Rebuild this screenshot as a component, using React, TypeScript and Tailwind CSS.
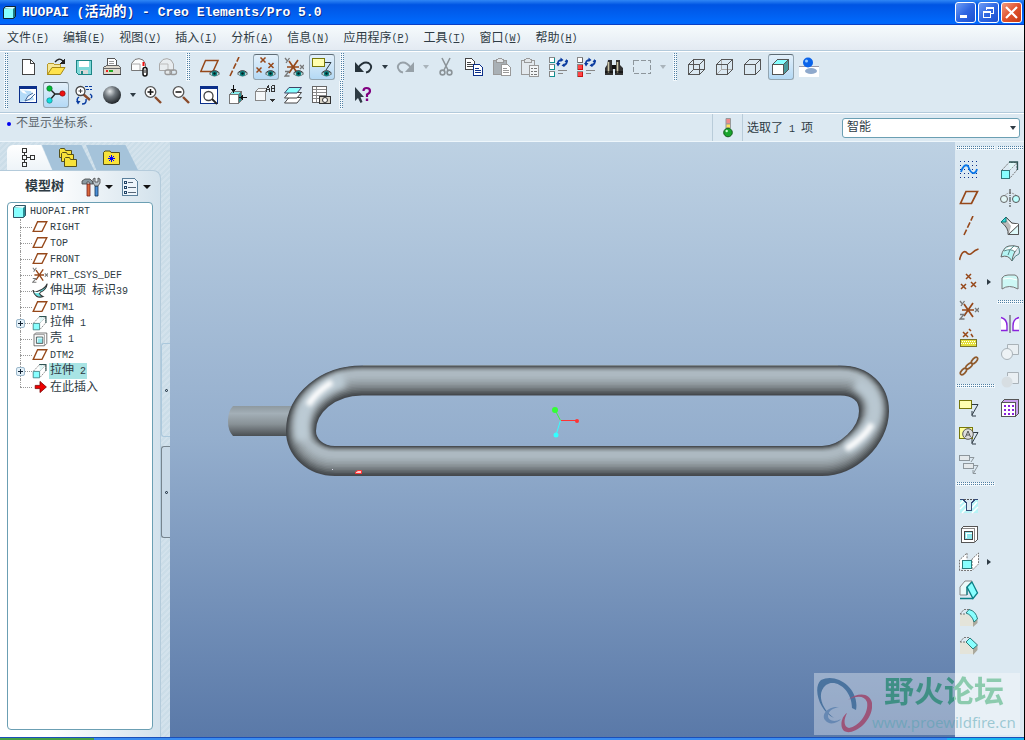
import type { ReactNode } from "react";

const BROWN = "#96481a";
const TEAL = "#0f8f8f";
const INK = "#2e3b44";

/* ---------- text ---------- */

// Latin is set smaller than Chinese so that two Latin letters fill one Chinese cell.
function Mixed({ text }: { text: string }) {
  const parts = text.match(/[\u4e00-\u9fff]+|[^\u4e00-\u9fff]+/g) ?? [];
  return (
    <>
      {parts.map((part, i) =>
        /[\u4e00-\u9fff]/.test(part) ? (
          <span key={i} className="text-[12px]">
            {part}
          </span>
        ) : (
          <span key={i} className="text-[10px]">
            {part}
          </span>
        )
      )}
    </>
  );
}

/* ---------- icons ---------- */

function Icon({ children, smooth = false }: { children: ReactNode; smooth?: boolean }) {
  return (
    <svg
      width="20"
      height="20"
      viewBox="0 0 20 20"
      fill="none"
      shapeRendering={smooth ? "auto" : "crispEdges"}
      aria-hidden="true"
      className="shrink-0"
    >
      {children}
    </svg>
  );
}

const eye = (
  <g shapeRendering="auto">
    <path d="M9.5 17Q14.500 11.500 19.500 17Q14.500 21 9.500 17Z" fill="#d7efef" stroke="#6f7f80" />
    <circle cx="14.500" cy="16.500" r="2.700" fill="#0d8080" />
    <circle cx="14.500" cy="16.500" r="1.200" fill="#022" />
    <path d="M9.500 16Q14.500 11 19.500 16" stroke="#444" />
  </g>
);

const csys = (
  <g stroke={BROWN} strokeWidth="1.700" shapeRendering="auto">
    <path d="M3 10H15M5 4L14 17M14 3L5 16" />
    <path d="M1 1L3 3.500M5.500 1L2 6M1 14.500H5L1 19H5.500M16 8L20 12M20 8L16 12" stroke="#777" strokeWidth="1.300" />
  </g>
);

const cross = (x: number, y: number) => <path d={`M${x - 2.5} ${y - 2.5}l5 5m0 -5l-5 5`} />;

const wire = (
  <g stroke="#555">
    <path d="M1.500 7.500H12.500V17.500H1.500ZM1.500 7.500L6.500 2.500H17.500L12.500 7.500M17.500 2.500V12.500L12.500 17.500" />
  </g>
);

const sheet = (x: number, y: number, color: string) => (
  <g>
    <path d={`M${x + 0.5} ${y + 0.5}h6l3 3v8h-9z`} fill="#fff" stroke={color} />
    <path d={`M${x + 2} ${y + 4.5}h4M${x + 2} ${y + 6.5}h6M${x + 2} ${y + 8.5}h6`} stroke={color} />
  </g>
);

// Three status boxes: the first stays plain, the rest are filled with the box colour.
const regen = (box: string, fill: string) => (
  <>
    {[0, 7, 14].map((y, i) => (
      <g key={y}>
        <path d={`M1.500 ${y + 0.5}h5v5h-5z`} fill={i === 0 ? "#fff" : fill} stroke="#888" />
        <path d={`M6.500 ${y + 1}v4.500h-5`} stroke={i === 0 && fill !== "#fff" ? "#666" : box} />
      </g>
    ))}
    <g shapeRendering="auto" stroke="#0a3ca0" strokeWidth="1.800">
      <path d="M10 8Q9 3 14 3M19 3Q19 8 15 8.500" />
      <path d="M8 6h4.500L10 9.500ZM12.500 .5V5L15.500 3ZM16.500 6V10L13.500 8.500ZM16.500 5H20L18.500 2Z" fill="#0a3ca0" stroke="none" />
    </g>
    <path d="M10 13.500H19M10 16.500H15" stroke="#888" />
  </>
);

const extrude = (
  <>
    <path d="M1.500 10.500H9.500V18.500H1.500Z" fill="#8ff" stroke="#33777a" />
    <g shapeRendering="auto">
      <path d="M2 10L9 2.500H17L10 10M17 3V10L10 18" stroke="#777" strokeDasharray="2 1" />
      <path d="M9 2H17.500V10" stroke="#2e5555" strokeWidth="1.300" />
      <path d="M9 3h7l-6 7z" fill="#dff7f7" />
    </g>
  </>
);

const lens = (
  <g shapeRendering="auto">
    <path d="M12 12L18 18" stroke="#8a4a2a" strokeWidth="2.400" />
    <circle cx="7.500" cy="7" r="5.300" fill="#fff" stroke="#555" strokeWidth="1.300" />
  </g>
);

const plane = <path d="M7 3.500H18.500L12.500 15.500H1.500Z" stroke={BROWN} strokeWidth="1.700" shapeRendering="auto" />;

const note = (
  <>
    <path d="M.500 2.500H12.500V10.500H.500Z" fill="#ffffb0" stroke="#77770a" />
    <path d="M13 6.500H19L13 17M13 13V18H17" stroke={INK} shapeRendering="auto" />
  </>
);

const shellBox = (
  <>
    <path d="M2.500 4.500L4.500 2.500H18.500V15.500L15.500 18.500H2.500Z" fill="#fff" stroke="#555" />
    <path d="M2.500 4.500H15.500V18.500" stroke="#888" />
    <path d="M5.500 7.500H13.500V15.500H5.500Z" fill="#8fe8ee" stroke="#444" />
    <path d="M7 14V9H13" stroke="#fff" />
  </>
);

const icons: Record<string, ReactNode> = {
  file: (
    <Icon>
      <path d="M4.500 2.500H12.500L16.500 6.500V17.500H4.500Z" fill="#fff" stroke="#444" />
      <path d="M12.500 2.500V6.500H16.500" stroke="#444" />
    </Icon>
  ),
  open: (
    <Icon>
      <path d="M1.500 17.500V7.500L3 6H7L8.500 7.500H14.500V10.500" fill="#f5e79a" stroke="#b99a2a" />
      <path d="M1.500 17.500L6 10.500H19L14.500 17.500Z" fill="#ffe34d" stroke="#a58814" shapeRendering="auto" />
      <path d="M9 5Q13 0 17 4" stroke="#222" strokeWidth="1.300" shapeRendering="auto" />
      <path d="M19 1.500V6.500H14Z" fill="#222" />
    </Icon>
  ),
  save: (
    <Icon>
      <path d="M2.500 3.500H17.500V17.500H4.500L2.500 15.500Z" fill="#7fd9d9" stroke="#1c8585" />
      <path d="M5 4H15V10H5Z" fill="#fff" />
      <path d="M6 13H14V17H6Z" fill="#d8d8d8" />
      <path d="M7 14H9V17H7Z" fill="#1c8585" />
    </Icon>
  ),
  print: (
    <Icon>
      <path d="M5.500 9V1.500H12.500L14.500 3.500V9" fill="#fff" stroke="#555" />
      <path d="M7 4.500H12M7 6.500H12" stroke="#999" />
      <path d="M1.500 10.500L4.500 8.500H16.500L18.500 10.500V17.500H1.500Z" fill="#ddd8cc" stroke="#666" />
      <path d="M2 11.500H18" stroke="#666" />
      <path d="M4 13H6V15H4Z" fill="#e22" />
      <path d="M7 13H11V15H7Z" fill="#2a2" />
      <path d="M2 17.500H19" stroke="#333" />
    </Icon>
  ),
  mailClip: (
    <Icon smooth>
      <path d="M1.500 6.500L5 2.500Q9 .5 13 3L15.500 7V13.500H1.500Z" fill="#fdfdfd" stroke="#777" />
      <path d="M1.500 7H10M10 7V13" stroke="#aaa" />
      <path d="M13.500 5V9" stroke="#e11" strokeWidth="2" />
      <rect x="13" y="10.500" width="4" height="8.500" rx="2" stroke="#111" strokeWidth="1.500" fill="#fff" />
      <path d="M15 12.500V16" stroke="#111" />
    </Icon>
  ),
  mailLink: (
    <Icon smooth>
      <path d="M1.500 6.500L5 2.500Q9 .5 13 3L15.500 7V13.500H1.500Z" fill="#e8ecef" stroke="#aaa" />
      <path d="M1.500 7H10M10 7V13" stroke="#bbb" />
      <rect x="7" y="13" width="6.500" height="4.500" rx="2" stroke="#999" fill="#e4e8ea" strokeWidth="1.300" />
      <rect x="12" y="13" width="6.500" height="4.500" rx="2" stroke="#999" strokeWidth="1.300" />
    </Icon>
  ),
  planeEye: (
    <Icon smooth>
      <path d="M5.500 3.500H18L13 14.500H.800Z" stroke={BROWN} strokeWidth="1.500" />
      {eye}
    </Icon>
  ),
  axisEye: (
    <Icon smooth>
      <path d="M2 19L11 0" stroke={BROWN} strokeWidth="1.600" strokeDasharray="6 2" />
      {eye}
    </Icon>
  ),
  pointEye: (
    <Icon smooth>
      <g stroke={BROWN} strokeWidth="1.500">
        {cross(7, 3)}
        {cross(15, 8.5)}
        {cross(3, 13)}
      </g>
      {eye}
    </Icon>
  ),
  csysEye: (
    <Icon smooth>
      {csys}
      {eye}
    </Icon>
  ),
  noteEye: (
    <Icon>
      <path d="M.500 1.500H12.500V9.500H.500Z" fill="#ffffb0" stroke="#77770a" />
      <path d="M13 5.500H19L14 13" stroke={INK} shapeRendering="auto" />
      {eye}
    </Icon>
  ),
  undo: (
    <Icon smooth>
      <path d="M4 11Q9 4 14.500 6Q19 9 16 13Q15 15 12 15.500" stroke="#26323a" strokeWidth="2" />
      <path d="M1 5V15H10Z" fill="#26323a" />
    </Icon>
  ),
  redo: (
    <Icon smooth>
      <path d="M16 11Q11 4 5.500 6Q1 9 4 13Q5 15 8 15.500" stroke="#97a1a8" strokeWidth="2" />
      <path d="M19 5V15H10Z" fill="#97a1a8" />
    </Icon>
  ),
  cut: (
    <Icon smooth>
      <path d="M6 1L12 13M14 1L8 13" stroke="#8b9398" strokeWidth="1.600" />
      <circle cx="6.500" cy="15.500" r="2.400" stroke="#8b9398" strokeWidth="1.600" />
      <circle cx="13.500" cy="15.500" r="2.400" stroke="#8b9398" strokeWidth="1.600" />
    </Icon>
  ),
  copy: (
    <Icon>
      {sheet(1, 1, "#444")}
      {sheet(9, 7, "#0b2f8a")}
    </Icon>
  ),
  paste: (
    <Icon>
      <path d="M1.500 3.500H14.500V17.500H1.500Z" fill="#a9b0b5" stroke="#999" />
      <path d="M4.500 5.500V3L6.500 1.500H9.500L11.500 3V5.500Z" fill="#e2e6e9" stroke="#999" />
      {sheet(9, 7, "#999")}
    </Icon>
  ),
  pasteSpecial: (
    <Icon>
      <path d="M1.500 3.500H14.500V17.500H1.500Z" fill="#e3e9ee" stroke="#999" />
      <path d="M4.500 5.500V3L6.500 1.500H9.500L11.500 3V5.500Z" fill="#e2e6e9" stroke="#999" />
      <path d="M9.500 8.500H18.500V19.500H9.500Z" fill="#f2f5f7" stroke="#999" />
      <path d="M11 11.500h2m1 0h3M11 14.500h2m1 0h3M11 17.500h2m1 0h3" stroke="#777" />
    </Icon>
  ),
  regen: <Icon>{regen(TEAL, "#fff")}</Icon>,
  regenRed: <Icon>{regen("#c11", "#f44")}</Icon>,
  find: (
    <Icon smooth>
      <path d="M4 3H8V8L9 10V18H1V11L3 8ZM12 3H16V8L19 11V18H11V10L12 8Z" fill="#333" />
      <path d="M8 8H12V12H8Z" fill="#111" />
      <path d="M4.500 5V16M13.500 5V16" stroke="#ccc6a8" strokeWidth="1.600" />
      <path d="M1 15H9M11 15H19" stroke="#000" strokeWidth="1" />
    </Icon>
  ),
  select: (
    <Icon>
      <path d="M1.500 3.500H18.500V16.500H1.500Z" stroke="#8d969c" strokeDasharray="5 2" />
    </Icon>
  ),
  wireframe: (
    <Icon>
      {wire}
      <path d="M6.500 2.500V12.500H17.500M6.500 12.500L1.500 17.500" stroke="#555" />
    </Icon>
  ),
  hidden: (
    <Icon>
      <path d="M6.500 2.500V12.500H17.500M6.500 12.500L1.500 17.500" stroke="#aaa" />
      {wire}
    </Icon>
  ),
  noHidden: <Icon>{wire}</Icon>,
  shaded: (
    <Icon>
      <path d="M1.500 7.500L6.500 2.500H17.500L12.500 7.500Z" fill="#8ff" />
      <path d="M1.500 7.500H12.500V17.500H1.500Z" fill="#fff" />
      <path d="M12.500 7.500L17.500 2.500V12.500L12.500 17.500Z" fill="#4a9a9c" />
      {wire}
    </Icon>
  ),
  realism: (
    <Icon smooth>
      <path d="M0 10H20V20H0Z" fill="#fff" />
      <path d="M0 9.500H20" stroke="#99a" />
      <ellipse cx="12" cy="14" rx="6" ry="3" fill="#8fa9cc" />
      <circle cx="9" cy="5.500" r="5" fill="#0a63ea" />
      <circle cx="7.500" cy="4" r="1.500" fill="#9cf" />
    </Icon>
  ),
  repaint: (
    <Icon>
      <path d="M1.500 1.500H18.500V17.500H1.500Z" fill="#fff" stroke="#0b2f8a" />
      <path d="M1 1H19V4H1Z" fill="#0b2f8a" />
      <path d="M2 5L13 6L16 15L2 17Z" fill="#b4dbf8" shapeRendering="auto" />
      <path d="M2 5L6 5.500L9 9L5 8Z" fill="#fff" shapeRendering="auto" />
      <path d="M15 8L10 11L7 16L12 14L17 9" fill="#eef6ff" stroke="#456a9a" shapeRendering="auto" />
    </Icon>
  ),
  spin: (
    <Icon smooth>
      <path d="M4 4L9 9H16M9 9L4 15" stroke="#222" strokeWidth="1.400" />
      <circle cx="3.500" cy="3.500" r="2.700" fill="#0b3" stroke="#163" strokeWidth=".600" />
      <circle cx="16.500" cy="8.500" r="2.700" fill="#e11" stroke="#711" strokeWidth=".600" />
      <circle cx="3.500" cy="15.500" r="2.700" fill="#1dd" stroke="#177" strokeWidth=".600" />
    </Icon>
  ),
  orient: (
    <Icon smooth>
      <path d="M9 9L16 15" stroke="#8a4a2a" strokeWidth="2.400" />
      <circle cx="6.500" cy="6" r="4.500" stroke="#444" strokeWidth="1.300" fill="#fff" />
      <path d="M4.500 6H8.500M6.500 4V8" stroke="#444" />
      <path d="M11 1.500H19M12 4.500H18" stroke="#0a3ca0" strokeDasharray="3 1" />
      <path d="M5 12Q2 14 4 17M8 19Q13 19 12 14M16 9Q19 11 17 13" stroke="#0a3ca0" strokeWidth="1.500" />
      <path d="M2 16H6.500L4 19.500Z" fill="#0a3ca0" />
    </Icon>
  ),
  sphere: (
    <Icon smooth>
      <defs>
        <radialGradient id="sphere" cx=".38" cy=".3" r=".7">
          <stop offset="0" stopColor="#e4e8ea" />
          <stop offset=".45" stopColor="#70787e" />
          <stop offset="1" stopColor="#22272b" />
        </radialGradient>
      </defs>
      <circle cx="10" cy="10" r="9" fill="url(#sphere)" />
    </Icon>
  ),
  zoomIn: (
    <Icon smooth>
      {lens}
      <path d="M4.500 7H10.500M7.500 4V10" stroke="#111" strokeWidth="1.500" />
    </Icon>
  ),
  zoomOut: (
    <Icon smooth>
      {lens}
      <path d="M4.500 7H10.500" stroke="#111" strokeWidth="1.500" />
    </Icon>
  ),
  refit: (
    <Icon>
      <path d="M1.500 1.500H18.500V18.500H1.500Z" fill="#fff" stroke="#0b2f8a" />
      <path d="M1 1H19V4H1Z" fill="#0b2f8a" />
      <g shapeRendering="auto">
        <circle cx="9.500" cy="11" r="4.500" stroke="#444" strokeWidth="1.300" />
        <path d="M13 14L18 19" stroke="#222" strokeWidth="1.800" />
      </g>
    </Icon>
  ),
  reorient: (
    <Icon>
      <path d="M2.500 9.500H11.500V18.500H2.500Z" fill="#fff" stroke="#777" />
      <path d="M2.500 9.500L5.500 6.500H14.500L11.500 9.500Z" fill="#8ee" stroke="#777" />
      <path d="M11.500 9.500L14.500 6.500V15.500L11.500 18.500Z" fill="#2a9090" stroke="#777" />
      <path d="M6.500 0V7M14 12.500H20" stroke="#111" />
      <path d="M4 4H9L6.500 8ZM16 10V15L12.500 12.500Z" fill="#111" />
    </Icon>
  ),
  views: (
    <Icon>
      <path d="M.500 6.500L3.500 3.500H11.500L10.500 6.500V15.500H.500ZM.500 6.500H10.500" fill="#f5f8fa" stroke="#888" />
      <path d="M11.500 7V3L12.500 .5H13.500L14.500 3V7M11.500 4.500H14.500M16.500 .5V6.500H19.500V.5ZM17 3.500H19.500" stroke="#222" strokeWidth=".900" />
      <path d="M15 14H20L17.500 17Z" fill="#333" />
    </Icon>
  ),
  layers: (
    <Icon smooth>
      <path d="M1.500 18L6 12.500H18.500L14 18Z" fill="#fff" stroke="#444" />
      <path d="M1.500 13L6 7.500H18.500L14 13Z" fill="#fff" stroke="#444" />
      <path d="M1.500 8L6 2.500H18.500L14 8Z" fill="#8ff" stroke="#446" />
    </Icon>
  ),
  viewManager: (
    <Icon>
      <path d="M1.500 1.500H15.500V17.500H1.500Z" fill="#fff" stroke="#666" />
      <path d="M2 4.500H15M2 7.500H15M2 10.500H15M2 13.500H9M5.500 2V17" stroke="#888" />
      <path d="M8.500 11.500H19.500V18.500H8.500Z" fill="#d8d3c6" stroke="#333" />
      <circle cx="14" cy="15" r="2.500" fill="#fff" stroke="#333" shapeRendering="auto" />
    </Icon>
  ),
  help: (
    <Icon smooth>
      <path d="M2 2V16L5 13L7.500 18L9.500 17L7.500 12H11Z" fill={INK} />
      <path d="M10.500 6Q10.500 3 13.500 3Q17 3 17 6Q17 8 14 9.500V12" stroke="#800080" strokeWidth="2.200" />
      <path d="M12.800 13.500H15.200V16H12.800Z" fill="#800080" />
    </Icon>
  ),
  sketch: (
    <Icon>
      <path
        d="M1 1.500H19M1 5.500H19M1 9.500H19M1 13.500H19M1 17.500H19"
        stroke="#0b2f8a"
        strokeDasharray="1 3"
      />
      <path d="M2 12Q5 3 9 6Q12 14 15 13Q17 13 18 9" stroke="#0a76e8" strokeWidth="1.800" shapeRendering="auto" />
    </Icon>
  ),
  plane: <Icon smooth>{plane}</Icon>,
  axis: (
    <Icon smooth>
      <path d="M5 19L14 0" stroke={BROWN} strokeWidth="1.600" strokeDasharray="6 2" />
    </Icon>
  ),
  curve: (
    <Icon smooth>
      <path d="M.500 16Q3 6 7 8Q10 12 13 9Q16 6 19.500 5" stroke={BROWN} strokeWidth="1.600" />
    </Icon>
  ),
  points: (
    <Icon smooth>
      <g stroke={BROWN} strokeWidth="1.500">
        {cross(9.5, 4.5)}
        {cross(4.5, 14.5)}
        {cross(14.5, 12.5)}
      </g>
    </Icon>
  ),
  csys: <Icon smooth>{csys}</Icon>,
  analysis: (
    <Icon>
      <path d="M4 4l5 5m0 -5l-5 5M10 1l2 2M12 6l2 3" stroke={BROWN} strokeWidth="1.500" shapeRendering="auto" />
      <path d="M1.500 11.500H17.500V18.500H1.500Z" fill="#e3df3a" stroke="#77752a" />
      <path d="M3 13.500H17M2 15.500H17" stroke="#fff" strokeDasharray="1 1" />
    </Icon>
  ),
  chain: (
    <Icon smooth>
      <g stroke="#8f5a2c" strokeWidth="1.700">
        <ellipse cx="4.500" cy="15.500" rx="4" ry="2" transform="rotate(-48 4.500 15.500)" />
        <ellipse cx="10" cy="10" rx="4" ry="2" transform="rotate(-42 10 10)" />
        <ellipse cx="15.500" cy="4.500" rx="4" ry="2" transform="rotate(-48 15.500 4.500)" />
      </g>
    </Icon>
  ),
  note: <Icon>{note}</Icon>,
  noteCircle: (
    <Icon>
      {note}
      <path d="M.500 1.500H13.500V12.500H.500Z" fill="#ffff9a" stroke="#77770a" />
      <g shapeRendering="auto" stroke="#555">
        <circle cx="9" cy="8" r="5.300" fill="#ddd" />
        <path d="M6.500 11L9 5L11.500 11M7.500 9H10.500" />
      </g>
    </Icon>
  ),
  noteGray: (
    <Icon>
      <path d="M.500 1.500H10.500V6.500H.500ZM4.500 9.500H14.500V14.500H4.500Z" fill="#e4e9ec" stroke="#8d969c" />
      <path d="M11 3.500H15L12 8M15 11.500H19L14.500 19M14 16V19.500H17" stroke="#8d969c" shapeRendering="auto" />
    </Icon>
  ),
  hole: (
    <Icon>
      <path d="M1 3H4L7 7V15H13V7L16 3H19V17H1Z" fill="#b8f4f7" />
      <path d="M1 8L5 4M1 13L7 7M3 17L8 12M13 12L18 6M13 17L19 11" stroke="#fff" strokeWidth="1.500" shapeRendering="auto" />
      <path d="M1 3.500H4L7.500 7V14.500H12.500V7L16 3.500H19" stroke="#334a77" />
      <path d="M5 3.500H15" stroke="#555" strokeDasharray="2 1" />
    </Icon>
  ),
  shell: <Icon>{shellBox}</Icon>,
  rib: (
    <Icon>
      <path d="M.500 18.500V8L8 1V7M13 17V7L19.500 1V12L13 18.500H.500" fill="#fff" stroke="#777" strokeDasharray="2 1" shapeRendering="auto" />
      <path d="M4 8.500H12.500V16.500H3.500Z" fill="#8ff" stroke="#2a7a7a" />
    </Icon>
  ),
  draft: (
    <Icon smooth>
      <path d="M1 7L6 1H13L8 7V15H1Z" fill="#eafafa" stroke="#888" />
      <path d="M8 7L13 2L18.500 13L14 18.500Z" fill="#8ff" stroke="#0a7f86" strokeWidth="1.300" />
      <path d="M8 7V15M1 18.500H14" stroke="#0a7f86" strokeWidth="1.300" />
    </Icon>
  ),
  round: (
    <Icon smooth>
      <path d="M1 6V18H14V13Q13 8 7 6Z" fill="#e4e4da" />
      <path d="M14 13L18.500 10V15L14 19Z" fill="#aaa89c" />
      <path d="M7 5L10 1.500Q17 3 18.500 11L15 14Q13 7 7 5Z" fill="#8ff" stroke="#2a7a7a" />
      <path d="M1 6L5 1.500H10M1 6H7" stroke="#777" strokeDasharray="2 1" />
    </Icon>
  ),
  chamfer: (
    <Icon smooth>
      <path d="M1 6V18H14V13L7 6Z" fill="#e4e4da" />
      <path d="M14 13L18.500 9V14L14 19Z" fill="#aaa89c" />
      <path d="M7 6L11 2L18.500 9L14 13Z" fill="#8ff" stroke="#2a7a7a" />
      <path d="M1 6L5 1.500H11M1 6H7" stroke="#777" strokeDasharray="2 1" />
    </Icon>
  ),
  extrude: <Icon>{extrude}</Icon>,
  revolve: (
    <Icon smooth>
      <path d="M4 8Q10 2 17 8" stroke="#999" strokeDasharray="2 1" />
      <circle cx="4" cy="11" r="3.500" fill="#e2f6f6" stroke="#666" />
      <circle cx="16" cy="11" r="3.500" fill="#bff" stroke="#555" />
      <path d="M10 1V19" stroke="#333" strokeDasharray="5 1 1 1" />
    </Icon>
  ),
  sweepBlend: (
    <Icon smooth>
      <path d="M1 6L6 1L12 7L18.500 8V18.500H8Q9 12 1 6Z" fill="#bbb" stroke="#555" />
      <path d="M1 6L6 1V6Z" fill="#3dd" stroke="#177" />
      <path d="M6 3L12 8H18V9L9 17L11 10Z" fill="#fff" />
      <path d="M8.500 18.500L18.500 9V18.500Z" fill="#dffafa" stroke="#555" />
    </Icon>
  ),
  boundary: (
    <Icon smooth>
      <path d="M1 13Q3 3 9 2Q14 1 19 3Q13 8 12 17Q8 10 1 13Z" fill="#b5f4f4" stroke="#666" />
      <path d="M3 8Q6 4 9 3Q13 2 18 4L14 8Q10 4 3 8Z" fill="#fff" />
      <path d="M4 7Q11 4 15 8M8 11Q9 5 14 2M19 4Q20 9 19 10Q15 11 12 17" stroke="#588" />
    </Icon>
  ),
  style: (
    <Icon smooth>
      <path d="M2 17V6Q4 3 8 3H15Q18 4 18 7V17Q9 12 2 17Z" fill="#cdf7f5" stroke="#777" />
      <path d="M3 7Q10 5 17 8" stroke="#fff" />
    </Icon>
  ),
  mirror: (
    <Icon smooth>
      <path d="M1 3.500Q7 5 7 12V16.500H1M19 3.500Q13 5 13 12V16.500H19" fill="#fff" stroke="#8a22dd" strokeWidth="1.400" />
      <path d="M10 1V19" stroke="#444" />
    </Icon>
  ),
  merge: (
    <Icon smooth>
      <path d="M7.500 2.500H18.500V12.500H7.500Z" fill="#e9eff3" stroke="#a9b2b8" />
      <circle cx="7" cy="12" r="5.500" fill="#edf2f5" stroke="#a9b2b8" />
    </Icon>
  ),
  trim: (
    <Icon smooth>
      <path d="M7.500 6V2.500H18.500V13.500H12.500" fill="#e9eff3" stroke="#a9b2b8" />
      <circle cx="7" cy="12" r="5.500" fill="#d7dee2" />
    </Icon>
  ),
  pattern: (
    <Icon>
      <path d="M1.500 4.500L4.500 1.500H18.500V15.500L15.500 18.500H1.500Z" fill="#caa0ee" stroke="#555" />
      <path d="M1.500 4.500H15.500V18.500H1.500Z" fill="#fff" stroke="#555" />
      <path d="M4 8H14M4 12H14M4 16H14" stroke="#8a22dd" strokeWidth="2" strokeDasharray="2 2" />
    </Icon>
  ),
};

/* ---------- toolbar parts ---------- */

function ToolButton({ icon, label, on = false }: { icon: string; label: string; on?: boolean }) {
  return (
    <div className="flex size-7 shrink-0 items-center justify-center">
      <button
        type="button"
        aria-label={label}
        aria-pressed={on}
        className={
          on
            ? "flex size-[26px] items-center justify-center rounded-[3px] border border-[#93a5b1] border-t-[#5f6c75] bg-linear-to-b from-[#e3f0fa] to-[#b4d9f5]"
            : "flex size-[26px] items-center justify-center"
        }
      >
        {icons[icon]}
      </button>
    </div>
  );
}

function DropArrow({ label, faint = false }: { label: string; faint?: boolean }) {
  return (
    <button type="button" aria-label={label} className="flex h-7 w-[13px] shrink-0 items-center justify-center">
      <svg width="6" height="4" viewBox="0 0 6 4" aria-hidden="true">
        <path d="M0 0H6L3 4Z" fill={faint ? "#aab4bb" : INK} />
      </svg>
    </button>
  );
}

function GripV() {
  return (
    <div className="mr-1.5 ml-1 h-7 w-1 shrink-0 bg-[conic-gradient(#4f7fa3_25%,#f2f8fc_0)] bg-size-[2px_2px]" />
  );
}

function GripH() {
  return <div className="mt-1 mr-px mb-1.5 ml-px h-1 bg-[conic-gradient(#4f7fa3_25%,#f2f8fc_0)] bg-size-[2px_2px]" />;
}

/* ---------- title and menu ---------- */

function TitleBar() {
  const box = "flex size-[21px] items-center justify-center rounded-[3px] border border-white";
  const blue = "bg-linear-to-br from-[#6f9df5] via-[#2f66e2] to-[#1c4fd0]";
  return (
    <header className="flex h-[25px] items-center justify-between border-b border-[#0a3fc4] bg-linear-to-b from-[#2f86f5] from-0% via-[#0054e3] via-20% to-[#0068fb] to-90% pr-0.5 pl-[3px]">
      <div className="flex items-center gap-1.5">
        <svg width="13" height="13" viewBox="0 0 13 13" aria-hidden="true">
          <path d="M.5 2.500L2.500 .5H12.500V10.500L10.500 12.500H.5Z" fill="#1d7f86" stroke="#123" />
          <path d="M1 3H10V12H1Z" fill="#8ff" />
          <path d="M1 2.500L3 1H12L10 3Z" fill="#d7ffff" />
        </svg>
        <h1 className="font-['Liberation_Mono','Noto_Sans_CJK_SC',monospace] text-[13px] leading-5 font-bold whitespace-pre text-white [text-shadow:1px_1px_0_#0b2f8a]">
          HUOPAI (<span className="text-[14px]">活动的</span>) - Creo Elements/Pro 5.0
        </h1>
      </div>
      <div className="flex gap-0.5">
        <button type="button" aria-label="最小化" className={`${box} ${blue}`}>
          <svg width="15" height="15" viewBox="0 0 15 15" aria-hidden="true">
            <path d="M2 10H9V13H2Z" fill="#fff" />
          </svg>
        </button>
        <button type="button" aria-label="还原" className={`${box} ${blue}`}>
          <svg width="15" height="15" viewBox="0 0 15 15" fill="none" stroke="#fff" shapeRendering="crispEdges" aria-hidden="true">
            <path d="M5.500 5V2.500H12.500V8.500H10M5 3H13M2.500 6.500H9.500V12.500H2.500ZM2 7.500H10" />
          </svg>
        </button>
        <button type="button" aria-label="关闭" className={`${box} bg-linear-to-br from-[#f09a80] via-[#e0512b] to-[#c53a12]`}>
          <svg width="15" height="15" viewBox="0 0 15 15" aria-hidden="true">
            <path d="M2 2L13 13M13 2L2 13" stroke="#fff" strokeWidth="2.200" />
          </svg>
        </button>
      </div>
    </header>
  );
}

const menus = [
  ["文件", "F"],
  ["编辑", "E"],
  ["视图", "V"],
  ["插入", "I"],
  ["分析", "A"],
  ["信息", "N"],
  ["应用程序", "P"],
  ["工具", "T"],
  ["窗口", "W"],
  ["帮助", "H"],
];

function MenuBar() {
  return (
    <nav className="flex h-[26px] items-end gap-3.5 border-b border-[#b3cadb] bg-linear-to-b from-[#f6fbfd] to-[#e3eaf2] pb-px pl-[7px]">
      {menus.map(([name, key]) => (
        <button key={key} type="button" className="flex items-center leading-5 whitespace-nowrap">
          <span className="text-[12px]">{name}</span>
          <span className="text-[10px]">
            (<u>{key}</u>)
          </span>
        </button>
      ))}
    </nav>
  );
}

function Toolbars() {
  return (
    <div className="border-t border-b border-t-white border-b-[#b3cadb] pt-px pb-[3px]">
      <div className="flex">
        <GripV />
        <ToolButton icon="file" label="新建" />
        <ToolButton icon="open" label="打开" />
        <ToolButton icon="save" label="保存" />
        <ToolButton icon="print" label="打印" />
        <ToolButton icon="mailClip" label="发送附件" />
        <ToolButton icon="mailLink" label="发送链接" />
        <GripV />
        <ToolButton icon="planeEye" label="平面显示" />
        <ToolButton icon="axisEye" label="轴显示" />
        <ToolButton icon="pointEye" label="点显示" on />
        <ToolButton icon="csysEye" label="坐标系显示" />
        <ToolButton icon="noteEye" label="注释显示" on />
        <GripV />
        <ToolButton icon="undo" label="撤消" />
        <DropArrow label="撤消列表" />
        <ToolButton icon="redo" label="重做" />
        <DropArrow label="重做列表" faint />
        <ToolButton icon="cut" label="剪切" />
        <ToolButton icon="copy" label="复制" />
        <ToolButton icon="paste" label="粘贴" />
        <ToolButton icon="pasteSpecial" label="选择性粘贴" />
        <ToolButton icon="regen" label="再生" />
        <ToolButton icon="regenRed" label="再生管理器" />
        <ToolButton icon="find" label="查找" />
        <ToolButton icon="select" label="框选" />
        <DropArrow label="选取方式" faint />
        <GripV />
        <ToolButton icon="wireframe" label="线框" />
        <ToolButton icon="hidden" label="隐藏线" />
        <ToolButton icon="noHidden" label="无隐藏线" />
        <ToolButton icon="shaded" label="着色" on />
        <ToolButton icon="realism" label="增强的真实感" />
      </div>
      <div className="flex">
        <GripV />
        <ToolButton icon="repaint" label="重画" />
        <ToolButton icon="spin" label="旋转中心" on />
        <ToolButton icon="orient" label="定向模式" />
        <ToolButton icon="sphere" label="外观库" />
        <DropArrow label="外观列表" />
        <ToolButton icon="zoomIn" label="放大" />
        <ToolButton icon="zoomOut" label="缩小" />
        <ToolButton icon="refit" label="重新调整" />
        <ToolButton icon="reorient" label="重定向" />
        <ToolButton icon="views" label="已命名的视图" />
        <ToolButton icon="layers" label="层" />
        <ToolButton icon="viewManager" label="视图管理器" />
        <GripV />
        <ToolButton icon="help" label="帮助" />
      </div>
    </div>
  );
}

function StatusBar() {
  return (
    <div className="flex h-[29px] border-t border-white border-b border-b-[#eef6fb]">
      <div className="flex flex-1 gap-1 pl-[7px] text-[#5a646b]">
        <span className="mt-2 size-1 rounded-full bg-[#0000f0]" />
        <p className="pl-px leading-[18px] whitespace-nowrap">
          <Mixed text="不显示坐标系." />
        </p>
      </div>
      <div className="flex w-[31px] items-center justify-center border-x border-[#b9ccd9]">
        <svg width="10" height="20" viewBox="0 0 10 20" aria-label="再生状态" role="img">
          <path d="M3 .5H7.500V6H3Z" fill="#f08a8a" stroke="#999" />
          <path d="M3 6H7.500V10H3Z" fill="#ffe45a" stroke="#999" />
          <circle cx="5" cy="14.500" r="4.300" fill="#19a52c" stroke="#145c1c" />
          <circle cx="3.700" cy="13" r="1.200" fill="#c8ffd0" />
        </svg>
      </div>
      <label htmlFor="filter" className="w-[99px] pl-1 leading-7 whitespace-pre">
        <Mixed text="选取了 1 项" />
      </label>
      <div className="relative mt-1 mr-1 h-5 w-[178px]">
        <select
          id="filter"
          className="block h-5 w-full appearance-none rounded-[3px] border border-[#6b9fb3] bg-white pl-1 text-[12px] leading-4"
        >
          <option>智能</option>
        </select>
        <svg width="6" height="4" viewBox="0 0 6 4" className="pointer-events-none absolute top-2 right-1" aria-hidden="true">
          <path d="M0 0H6L3 4Z" fill={INK} />
        </svg>
      </div>
    </div>
  );
}

/* ---------- model tree ---------- */

type Node = { label: string; icon: ReactNode; expandable?: boolean; active?: boolean };

const small = (children: ReactNode) => (
  <svg width="16" height="16" viewBox="0 0 20 20" fill="none" aria-hidden="true" className="shrink-0">
    {children}
  </svg>
);

const nodes: Node[] = [
  { label: "RIGHT", icon: small(plane) },
  { label: "TOP", icon: small(plane) },
  { label: "FRONT", icon: small(plane) },
  { label: "PRT_CSYS_DEF", icon: small(csys) },
  {
    label: "伸出项 标识39",
    icon: small(
      <>
        <path d="M1 9Q4 13 10 9Q16 7 19 1Q18 9 10 12Q8 14 14 17Q4 20 1 9Z" fill="#6dd" stroke="#333" strokeWidth="1.300" />
        <path d="M3 11Q6 13 10 11" stroke="#fff" strokeWidth="1.500" />
      </>
    ),
  },
  { label: "DTM1", icon: small(plane) },
  { label: "拉伸 1", icon: small(extrude), expandable: true },
  { label: "壳 1", icon: small(shellBox) },
  { label: "DTM2", icon: small(plane) },
  { label: "拉伸 2", icon: small(extrude), expandable: true, active: true },
  { label: "在此插入", icon: small(<path d="M4 8H10V3L18 10L10 17V12H4Z" fill="#e00" stroke="#700" />) },
];

const folder = (x: number, y: number) => (
  <path d={`M${x + 0.5} ${y + 9.5}v-8l1 -1h4l1 2h6v7z`} fill="#f8e23a" stroke="#55501a" />
);

function TreePanel() {
  return (
    <div className="flex w-[161px] flex-col">
      <div className="flex pt-[3px] pl-[7px]" role="tablist">
        <button
          type="button"
          role="tab"
          aria-selected="true"
          aria-label="模型树"
          className="z-10 flex h-[25px] w-[45px] items-center rounded-tl-md bg-linear-to-b from-white to-[#eef4f8] pl-3 [clip-path:polygon(0_0,76%_0,100%_100%,0_100%)]"
        >
          <svg width="18" height="20" viewBox="0 0 18 20" fill="none" stroke="#333" shapeRendering="crispEdges" aria-hidden="true">
            <path d="M3.500 .5h4v4h-4zM3.500 7.500h4v4h-4zM3.500 14.500h4v4h-4zM11.500 7.500h4v4h-4zM5.500 5v3M5.500 12v2M8 9.500h3" />
          </svg>
        </button>
        <button
          type="button"
          role="tab"
          aria-label="文件夹浏览器"
          className="-ml-2.5 flex h-[25px] w-[52px] items-center justify-center bg-[#a5c3da] [clip-path:polygon(0_0,76%_0,100%_100%,20%_100%)]"
        >
          <svg width="20" height="20" viewBox="0 0 20 20" aria-hidden="true">
            {folder(1, 0)}
            {folder(3, 4)}
            {folder(6, 9)}
          </svg>
        </button>
        <button
          type="button"
          role="tab"
          aria-label="收藏夹"
          className="-ml-2 flex h-[25px] w-[52px] items-center justify-center bg-[#a5c3da] [clip-path:polygon(0_0,76%_0,100%_100%,20%_100%)]"
        >
          <svg width="18" height="16" viewBox="0 0 18 16" aria-hidden="true">
            <path d="M.5 14.500V2.500L2 1H7L8 2.500H16.500V14.500Z" fill="#f8e23a" stroke="#55501a" />
            <path d="M8.500 5V12M5 8.500H12M6 6L11 11M11 6L6 11" stroke="#00f" />
          </svg>
        </button>
      </div>
      <section className="flex flex-1 flex-col rounded-tr-lg border-t border-r border-[#b4cbdb] bg-linear-to-r from-white from-30% to-[#d3e2ec] pr-[7px] pb-[7px] pl-[7px]">
        <div className="flex h-[31px] items-center pl-[18px]">
          <h2 className="w-14 text-[13px] leading-5 font-bold whitespace-nowrap">模型树</h2>
          <button type="button" aria-label="设置" className="flex items-center gap-1">
            <svg width="20" height="20" viewBox="0 0 20 20" fill="none" aria-hidden="true">
              <path d="M1 4L4 2H9L12 5V7H9L8 5H6V7H1Z" fill="#8a9aa2" stroke="#444" strokeWidth=".800" />
              <path d="M6 7H9V19H6Z" fill="#d9683a" stroke="#722" strokeWidth=".800" />
              <path d="M14 9H17V19H14Z" fill="#4a8fd8" stroke="#135" strokeWidth=".800" />
              <path d="M12 2V6L14 9H17L19 6V2L17 1V5H14V1Z" fill="#b8c2c8" stroke="#444" strokeWidth=".800" />
            </svg>
            <svg width="8" height="4" viewBox="0 0 8 4" aria-hidden="true">
              <path d="M0 0H8L4 4Z" fill="#111" />
            </svg>
          </button>
          <button type="button" aria-label="显示" className="ml-2 flex items-center gap-1">
            <svg width="18" height="20" viewBox="0 0 18 20" fill="none" shapeRendering="crispEdges" aria-hidden="true">
              <path d="M1.500 1.500H13.500L16.500 4.500V18.500H1.500Z" fill="#eef5fb" stroke="#5a7f9a" />
              <path d="M7 5.500H12M7 10.500H15M7 15.500H15" stroke="#567" />
              <path d="M3.500 4.500h2v2h-2zM3.500 9.500h2v2h-2zM3.500 14.500h2v2h-2z" stroke="#246" />
            </svg>
            <svg width="8" height="4" viewBox="0 0 8 4" aria-hidden="true">
              <path d="M0 0H8L4 4Z" fill="#111" />
            </svg>
          </button>
        </div>
        <div className="w-[146px] flex-1 rounded-[4px] border border-[#6b9fb3] bg-white pl-[5px]">
          <div className="flex h-4 items-center gap-1 whitespace-nowrap">
            <svg width="13" height="13" viewBox="0 0 13 13" aria-hidden="true">
              <path d="M.5 2.500L2.500 .5H12.500V10.500L10.500 12.500H.5Z" fill="#2a8f96" stroke="#356" />
              <path d="M1 3H10V12H1Z" fill="#8ff" />
              <path d="M1 2.500L3 1H12L10 3Z" fill="#e7ffff" />
            </svg>
            <span className="text-[10px]">HUOPAI.PRT</span>
          </div>
          <ul>
            {nodes.map((node, i) => (
              <li key={node.label} className="flex h-4 items-center whitespace-nowrap">
                <span className="relative flex h-4 w-[19px] items-center pl-[3px]">
                  <span
                    className={
                      i === nodes.length - 1
                        ? "absolute top-0 left-[7px] h-2 border-l border-dotted border-[#999]"
                        : "absolute top-0 left-[7px] h-4 border-l border-dotted border-[#999]"
                    }
                  />
                  <span className="absolute top-2 right-0 left-[7px] border-t border-dotted border-[#999]" />
                  {node.expandable && (
                    <button
                      type="button"
                      aria-label={`展开 ${node.label}`}
                      className="relative flex size-[9px] items-center justify-center rounded-[2px] border border-[#9db9cc] bg-[#e3f0f8]"
                    >
                      <svg width="5" height="5" viewBox="0 0 5 5" aria-hidden="true">
                        <path d="M0 2.500H5M2.500 0V5" stroke="#123" />
                      </svg>
                    </button>
                  )}
                </span>
                {node.icon}
                <span className={node.active ? "ml-px bg-[#a8e4e4] px-px leading-[14px]" : "ml-px px-px leading-[14px]"}>
                  <Mixed text={node.label} />
                </span>
              </li>
            ))}
          </ul>
        </div>
      </section>
    </div>
  );
}

function Sidebar() {
  const dot = <span className="size-[3px] rounded-full border border-[#123]" />;
  return (
    <aside className="flex w-[170px] shrink-0 bg-[repeating-linear-gradient(135deg,#cbdde8_0_2px,#d3e2ec_2px_4px)]">
      <TreePanel />
      <div className="flex flex-1 flex-col gap-[9px] pt-[201px]">
        <button
          type="button"
          aria-label="折叠面板"
          className="flex h-[94px] items-center justify-center rounded-l-[3px] border border-r-0 border-[#abc8dc]"
        >
          {dot}
        </button>
        <button
          type="button"
          aria-label="展开浏览器"
          className="flex h-[92px] items-center justify-center rounded-l-[3px] border border-r-0 border-[#76848e] bg-[#c8d9e6]"
        >
          {dot}
        </button>
      </div>
    </aside>
  );
}

/* ---------- 3D view ---------- */

const TUBE =
  "M362 380.500H840C862 380.500 874 394 874 411C874 436 848 461 822 461H335C315 461 301 447 301 431C301 403 328 380.500 362 380.500Z";

// Narrower and lighter strokes climb towards the light and round the tube off.
const SHADES = [
  "#45494d", "#4e5357", "#5a6064", "#666d71", "#72797d", "#7c8489", "#868e93", "#8e979c",
  "#959fa5", "#9ba6ac", "#a1acb3", "#a6b2b9", "#aab6be", "#adb9c1",
];

function Viewport() {
  return (
    <main className="flex min-w-0 flex-1 bg-linear-to-b from-[#bdd1e3] via-[#94aecd] to-[#5a79a8]">
      <svg viewBox="170 142 785 595" fill="none" className="min-w-0 flex-1" role="img" aria-label="HUOPAI 零件">
        <defs>
          <linearGradient id="stub" x1="0" y1="0" x2="0" y2="1">
            <stop offset="0" stopColor="#8e999f" />
            <stop offset=".25" stopColor="#a3afb7" />
            <stop offset=".6" stopColor="#899297" />
            <stop offset="1" stopColor="#4a4f53" />
          </linearGradient>
          <filter id="soft" x="-50%" y="-50%" width="200%" height="200%">
            <feGaussianBlur stdDeviation="3" />
          </filter>
          <filter id="shine" x="-50%" y="-50%" width="200%" height="200%">
            <feGaussianBlur stdDeviation="2" />
          </filter>
        </defs>
        <path d="M233 406H304V436H233Q228 431 228 421Q228 411 233 406Z" fill="url(#stub)" />
        {SHADES.map((color, i) => (
          <path key={color} d={TUBE} stroke={color} strokeWidth={30 - i * 2} transform={`translate(0 ${-i * 0.5})`} />
        ))}
        <g filter="url(#soft)">
          <path d="M303 440Q298 412 315 397Q326 386 344 380" stroke="#bccbd4" strokeWidth="14" />
          <path d="M856 383Q880 396 874 418Q866 438 846 448" stroke="#b9c8d1" strokeWidth="13" />
        </g>
        <g filter="url(#shine)">
          <path d="M308 405Q316 392 332 382" stroke="#fff" strokeWidth="6" />
          <path d="M872 424Q864 438 846 449" stroke="#fff" strokeWidth="6" />
        </g>
        <path d="M363 365.500H838" stroke="#7c888e" />
        <path d="M560.500 420.500H577" stroke="#f33" />
        <path d="M560.500 420.500L555 410" stroke="#3f3" />
        <path d="M560.500 420.500L556 435" stroke="#3ff" />
        <circle cx="577" cy="421" r="2" fill="#f33" />
        <circle cx="555" cy="410" r="3" fill="#3f3" />
        <circle cx="556" cy="435" r="2.500" fill="#3ff" />
        <path d="M355.500 472L358 470.500H361.500V473.500H355.500Z" fill="#fcc" stroke="#f33" />
        <path d="M332 469.500H333" stroke="#dde" />
      </svg>
    </main>
  );
}

/* ---------- feature toolbars ---------- */

function Column({ groups }: { groups: [string, string][][] }) {
  return (
    <>
      {groups.map((group, i) => (
        <div key={i}>
          <GripH />
          {group.map(([icon, label]) => (
            <div key={icon} className="flex h-7 items-center">
              <ToolButton icon={icon} label={label} />
              {(icon === "points" || icon === "rib") && (
                <button type="button" aria-label={`${label}选项`} className="flex h-7 w-3 items-center justify-center">
                  <svg width="4" height="6" viewBox="0 0 4 6" aria-hidden="true">
                    <path d="M0 0V6L4 3Z" fill={INK} />
                  </svg>
                </button>
              )}
            </div>
          ))}
        </div>
      ))}
    </>
  );
}

function FeatureBars() {
  return (
    <aside className="flex shrink-0">
      <div className="w-[41px]">
        <Column
          groups={[
            [
              ["sketch", "草绘"],
              ["plane", "平面"],
              ["axis", "轴"],
              ["curve", "曲线"],
              ["points", "点"],
              ["csys", "坐标系"],
              ["analysis", "分析"],
              ["chain", "参照"],
            ],
            [
              ["note", "注释"],
              ["noteCircle", "注释元素"],
              ["noteGray", "传播注释"],
            ],
            [
              ["hole", "孔"],
              ["shell", "壳"],
              ["rib", "筋"],
              ["draft", "拔模"],
              ["round", "倒圆角"],
              ["chamfer", "倒角"],
            ],
          ]}
        />
      </div>
      <div className="w-7">
        <Column
          groups={[
            [
              ["extrude", "拉伸"],
              ["revolve", "旋转"],
              ["sweepBlend", "扫描混合"],
              ["boundary", "边界混合"],
              ["style", "造型"],
            ],
            [
              ["mirror", "镜像"],
              ["merge", "合并"],
              ["trim", "修剪"],
              ["pattern", "阵列"],
            ],
          ]}
        />
      </div>
    </aside>
  );
}

function Watermark() {
  return (
    <div className="pointer-events-none absolute right-1 bottom-[2px] flex h-[62px] w-[206px] items-center bg-white/35">
      <svg width="58" height="60" viewBox="0 0 58 60" className="shrink-0" aria-hidden="true">
        <path d="M42 36C46 14 22 -2 7 6C-2 14 6 38 20 44C6 34 3 18 12 11C22 4 38 16 38 34Z" fill="#4a739f" />
        <path d="M25 33C14 32 7 40 11 46C15 52 24 49 27 45C20 49 14 46 14 42C14 37 19 34 25 33Z" fill="#6688b3" />
        <path d="M34 26C46 16 60 20 58 34C56 50 38 62 30 57C25 52 28 42 33 39C29 47 30 53 35 54C46 52 55 38 53 28C50 21 42 22 34 26Z" fill="#9c5579" />
      </svg>
      <div className="flex flex-col">
        <span className="bg-linear-to-r from-[#3f8f85] from-57% to-[#8ccbae] to-57% bg-clip-text pl-3 text-[30px] leading-9 font-bold whitespace-nowrap text-transparent">
          野火论坛
        </span>
        <span className="font-['Noto_Sans',sans-serif] text-[15px] leading-5 whitespace-nowrap text-[#4fa0b0]/50">
          www.proewildfire.cn
        </span>
      </div>
    </div>
  );
}

export default function App() {
  return (
    <div className="flex min-h-screen flex-col border-r border-black bg-[#dce9f2] font-['Liberation_Mono','Noto_Sans_CJK_SC',monospace] text-[#2e3b44]">
      <TitleBar />
      <MenuBar />
      <Toolbars />
      <StatusBar />
      <div className="relative flex flex-1">
        <Sidebar />
        <Viewport />
        <FeatureBars />
        <Watermark />
      </div>
      <footer className="flex h-[3px] border-t border-[#1b4fb8]">
        <div className="w-[94px] bg-[#45a045]" />
        <div className="flex-1 bg-[#3b8cf0]" />
        <div className="w-[77px] bg-[#18b4f0]" />
      </footer>
    </div>
  );
}
